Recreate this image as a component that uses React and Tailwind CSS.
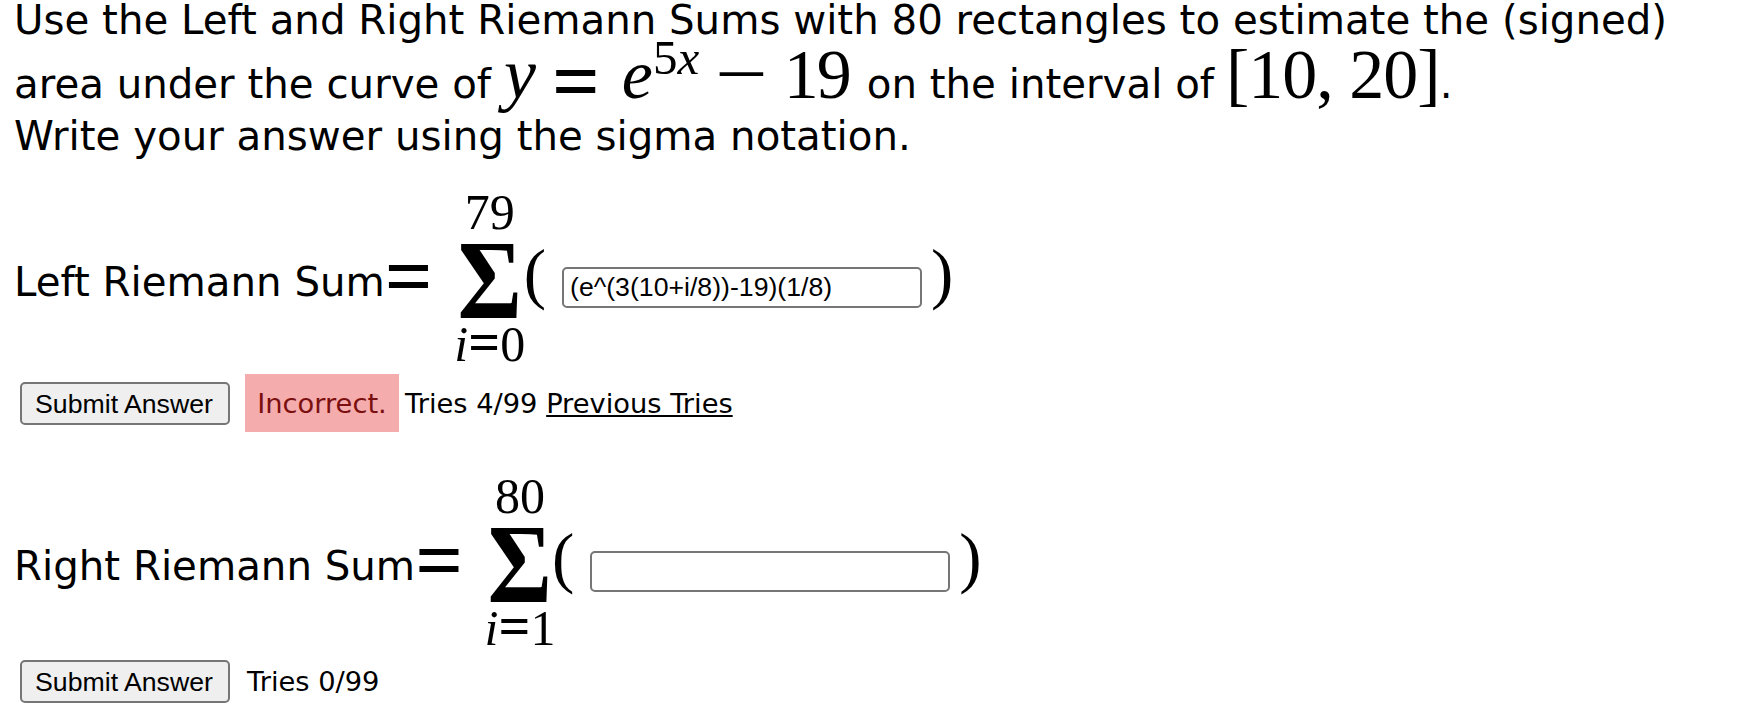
const sans = "font-['DejaVu_Sans',sans-serif]";
const serif = "font-['Liberation_Serif',serif]";

function SumRow({ label, top, bottom, value, parenGap, inputTop }) {
  return (
    <div className="flex items-start pl-[14px] text-black">
      <div className={`${sans} text-[40.3px] leading-[48px] mt-[66px]`}>{label}</div>
      <div className={`${serif} text-[84px] font-bold leading-[48px] mt-[60px]`}>=</div>
      <div className={`${serif} flex flex-col items-center ml-[26px] w-[62px] whitespace-nowrap`}>
        <div className="text-[50px] leading-[40px] mt-[-1px]">{top}</div>
        <div className="text-[112px] font-bold leading-[94px] mt-[1px] inline-block scale-x-[0.88]">Σ</div>
        <div className="text-[50px] leading-[40px] mt-[-5px]"><i>i</i><b className="text-[56px]">=</b>{bottom}</div>
      </div>
      <div className={`${serif} text-[67px] leading-[70px] mt-[45px] ${parenGap}`}>(</div>
      <input
        readOnly
        value={value}
        className={`ml-[16px] ${inputTop} w-[360px] h-[41px] border-2 border-[#767676] rounded-[5px] bg-white px-[6px] font-['Liberation_Sans',sans-serif] text-[26.67px] text-black`}
      />
      <div className={`${serif} text-[67px] leading-[70px] mt-[45px] ml-[9px]`}>)</div>
    </div>
  );
}

function SubmitButton() {
  return (
    <button className="w-[210px] h-[43px] pr-[2px] pb-[2px] border-2 border-[#767676] rounded-[5px] bg-[#efefef] font-['Liberation_Sans',sans-serif] text-[26.67px] text-black">
      Submit Answer
    </button>
  );
}

export default function App() {
  return (
    <div className="w-[1748px] h-[720px] overflow-hidden bg-white text-black">
      <div className={`${sans} text-[40.3px] leading-[41px] h-[41px] pl-[14px] whitespace-nowrap`}>
        Use the Left and Right Riemann Sums with 80 rectangles to estimate the (signed)
      </div>
      <div className={`${sans} text-[40.3px] leading-[48px] h-[72px] pt-[5px] flex items-baseline pl-[14px] whitespace-nowrap`}>
        <span>area under the curve of</span>
        <span className={`${serif} text-[72px] leading-[48px] ml-[13px]`}><i>y</i></span>
        <span className={`${serif} text-[84px] leading-[48px] font-bold ml-[16px] relative top-[12px]`}>=</span>
        <span className={`${serif} text-[70px] leading-[48px] ml-[22px]`}>
          <i>e</i><sup className="text-[49px] top-[-24px]">5<i>x</i></sup>
        </span>
        <span className={`${serif} text-[72px] leading-[48px] ml-[22px] inline-block scale-x-[1.3]`}>−</span>
        <span className={`${serif} text-[70px] leading-[48px] ml-[22px] tracking-[-2px]`}>19</span>
        <span className="ml-[17px]">on the interval of</span>
        <span className={`${serif} text-[70px] leading-[48px] ml-[12px] tracking-[-1px]`}>[10, 20]</span>
        <span>.</span>
      </div>
      <div className={`${sans} text-[40.3px] leading-[48px] pl-[14px]`}>Write your answer using the sigma notation.</div>

      <div className="mt-[32px]">
        <SumRow label="Left Riemann Sum" top="79" bottom="0" value="(e^(3(10+i/8))-19)(1/8)" parenGap="ml-[3px]" inputTop="mt-[74px]" />
      </div>
      <div className="flex items-center pl-[20px] mt-[10px]">
        <SubmitButton />
        <div className={`${sans} text-[27.3px] ml-[15px] pt-[2px] h-[58px] w-[154px] bg-[#f4acac] text-[#7b0f0f] flex items-center justify-center`}>Incorrect.</div>
        <div className={`${sans} text-[27.3px] ml-[6px] pt-[2px]`}>
          Tries 4/99 <span className="underline">Previous Tries</span>
        </div>
      </div>

      <div className="mt-[45px]">
        <SumRow label="Right Riemann Sum" top="80" bottom="1" value="" parenGap="ml-[1px]" inputTop="mt-[74px]" />
      </div>
      <div className="flex items-center pl-[20px] mt-[12px]">
        <SubmitButton />
        <div className={`${sans} text-[27.3px] ml-[17px] pt-[2px]`}>Tries 0/99</div>
      </div>
    </div>
  );
}
